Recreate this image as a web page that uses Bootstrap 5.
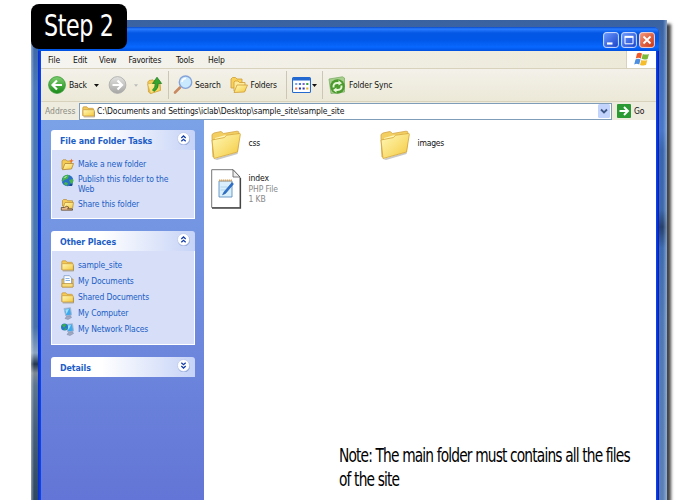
<!DOCTYPE html>
<html lang="en">
<head>
<meta charset="utf-8">
<title>Step 2</title>
<link href="https://cdn.jsdelivr.net/npm/bootstrap@5.3.0/dist/css/bootstrap.min.css" rel="stylesheet">
<style>
body{font-family:"DejaVu Sans Condensed","DejaVu Sans",sans-serif;font-stretch:condensed;font-size:8.5px;line-height:10px;letter-spacing:-.2px;color:#111;background:#fff;width:700px;height:500px;overflow:hidden}
svg{display:block;flex:none;overflow:visible}
.stage{width:700px;height:500px;overflow:hidden}
.desk{width:636px;height:490px;margin:20px 0 0 31px;padding:7px 7px 0;background:
 linear-gradient(90deg,rgba(255,255,255,.45) 0,transparent 3px,transparent 632px,rgba(190,215,245,.55) 636px),
 linear-gradient(#3a62a0 0,#4a78b8 60px,#4a78b0 200px,#4a72a8 300px,#8aa4c0 326px,#22364f 337px,#7d8894 346px,#5d7690 358px,#46607e 400px,#2c4560 480px) 0 7px/10px 480px no-repeat,
 linear-gradient(#3a62a0 0,#426fb8 50px,#4a78c8 110px,#3a66ae 130px,#3d68ae 175px,#3d68a8 190px,#26406c 207px,#3f6cae 228px,#4f78b4 300px,#5b80b6 480px)}
.desk{box-shadow:4px 4px 3px #444}
.win{width:621px;height:480px;border-radius:6px 6px 0 0;padding:0 3px;background:linear-gradient(90deg,#0a2cc8 0,#0a48f5 3px,#0a48f5 618px,#0a18b8 621px)}
.tbar{height:24px;margin:0 -3px;padding:5px 4px 0 0;border-radius:6px 6px 0 0;background:linear-gradient(#0a4ac8 0,#2a7cff 2px,#0357e4 6px,#0157e8 13px,#0868ff 20px,#0050e0 24px);gap:2px}
.wb{width:16px;height:16px}
.menu{height:18px;background:linear-gradient(90deg,#f5f4f0,#ece9d8);border-bottom:1px solid #d8d2bd;padding-left:7px}
.flagbox{width:30px;height:17px;background:#fff;border-left:1px solid #d8d2bd}
.tools{height:33px;background:linear-gradient(#f3f1e9,#ece9d8);border-bottom:1px solid #d8d2bd;padding-left:7px}
.addr{height:18px;background:#eeebdf;padding-left:4px}
.field{width:533px;height:17px;border:1px solid #7f9db9;background:#fff;padding:0 1px 0 2px}
.pathtext{margin-left:2px;letter-spacing:-.13px}
.vsep{width:1px;height:28px;background:#cbc7b4}
.side{width:163px;height:380px;background:linear-gradient(#7ba2e7,#6375d6);padding:10px 9px 0 10px}
.ptitle{height:20px;border-radius:3px 3px 0 0;background:linear-gradient(90deg,#fff 35%,#c6d3f7);padding:1px 5px 0 9px;color:#215dc6;font-weight:700;font-size:8.8px;letter-spacing:-.06px}
.ptitle svg{margin-top:-4px}
.pbody{background:#d6dff7;border:1px solid #fff;border-top:0;color:#215dc6;padding:6px 6px 0 9px;letter-spacing:-.12px}
.prow{height:16px;gap:4px}
.pic{width:13px;height:13px}
.main{background:#fff;padding:10px 0 0 7px}
.muted{color:#888}
.stepbox{position:absolute;left:31px;top:4px;width:96px;height:45px;border-radius:8px;background:#000;color:#fff;padding:5px 0 0 13px}
.stepbox span{display:inline-block;font-size:30.5px;line-height:34px;letter-spacing:-.5px;transform:scaleX(.81);transform-origin:0 0;white-space:nowrap}
.note{position:absolute;left:338.5px;top:443px;font-size:19px;line-height:24px;letter-spacing:-1.050px;color:#000;transform:scaleX(.806);transform-origin:0 0;white-space:nowrap}
</style>
</head>
<body>
<svg width="0" height="0" class="position-absolute">
<defs>
<linearGradient id="fg" x1="0" y1="0" x2="1" y2="1"><stop offset="0" stop-color="#fff9b8"/><stop offset="1" stop-color="#f4c93e"/></linearGradient>
<linearGradient id="gg" x1="0" y1="0" x2="0" y2="1"><stop offset="0" stop-color="#7fce6f"/><stop offset="1" stop-color="#178a17"/></linearGradient>
<linearGradient id="sg" x1="0" y1="0" x2="0" y2="1"><stop offset="0" stop-color="#e2e2e0"/><stop offset="1" stop-color="#a5a5a3"/></linearGradient>
<linearGradient id="bg1" x1="0" y1="0" x2="1" y2="1"><stop offset="0" stop-color="#6d9bff"/><stop offset="1" stop-color="#1741c8"/></linearGradient>
<linearGradient id="rg" x1="0" y1="0" x2="1" y2="1"><stop offset="0" stop-color="#f59a7c"/><stop offset="1" stop-color="#c9300e"/></linearGradient>
<symbol id="sfold" viewBox="0 0 13 13"><path d="M.8 10.500V3q0-1.200 1-1.200h3L6 3.300h4.500q1 0 1 1v6.200z" fill="#f3cb55" stroke="#c4923a" stroke-width=".7"/><path d="M1 11V5.500q0-.8.800-.8h9.700q.8 0 .8.800V11z" fill="url(#fg)" stroke="#c9963a" stroke-width=".7"/><path d="M1.800 11.900h10.900V6.500" fill="none" stroke="#8d7340" stroke-width=".6"/></symbol>
<symbol id="bfold" viewBox="0 0 30 30"><path d="M3 29 27 22 26.500 24 6 30z" fill="#777" opacity=".4"/><path d="M1 8V4.500L3 3l7-1.500 2.500 2L26 1.200q2-.2 2 1.800L26.500 21 2 27z" fill="#f3cf62" stroke="#d3a445" stroke-width=".8"/><path d="M13 5.500 25.500 3.500V20L4 25V8z" fill="#fff6b5"/><path d="M1 10 13.500 7.500l2-2.300 13-1.700q1 0 .8 1L26.500 22 3 28.500z" fill="url(#fg)" stroke="#d3a335" stroke-width=".8"/></symbol>
<symbol id="mon" viewBox="0 0 13 13"><path d="M3 1.500 9.500.8 10.500 8 4.800 9z" fill="#3fa9ee" stroke="#a9b5cf" stroke-width="1"/><path d="M4.200 2.500 8 2 5.500 7z" fill="#9de1ff"/><path d="M5.500 9.500l4-.7 1 1.700-3.500 2-3-1z" fill="#a3aac0" stroke="#7383ad" stroke-width=".5"/></symbol>
<symbol id="disc" viewBox="0 0 13 13"><circle cx="6.900" cy="7.200" r="6.100" fill="#8ba1d5"/><circle cx="6.500" cy="6.500" r="6" fill="#fff" stroke="#b9c6e8" stroke-width=".7"/></symbol>
<symbol id="chev" viewBox="0 0 13 13"><use href="#disc" width="13" height="13"/><path d="M4.300 6 6.500 4 8.700 6M4.300 9.300 6.500 7.300l2.200 2" fill="none" stroke="#153ea8" stroke-width="1.300"/></symbol>
</defs>
</svg>
<div class="stage d-flex position-relative">
 <div class="desk flex-shrink-0">
  <div class="win">
   <div class="tbar d-flex justify-content-end">
    <svg class="wb" viewBox="0 0 16 16"><rect x=".6" y=".6" width="14.800" height="14.800" rx="2.500" fill="url(#bg1)" stroke="#d5e1ff"/><path d="M4 11.500h5.500" stroke="#fff" stroke-width="2.200"/></svg>
    <svg class="wb" viewBox="0 0 16 16"><rect x=".6" y=".6" width="14.800" height="14.800" rx="2.500" fill="url(#bg1)" stroke="#d5e1ff"/><path d="M4 5.200h8v6.600H4z" fill="none" stroke="#fff" stroke-width="1"/><path d="M3.500 4.700h9" stroke="#fff" stroke-width="1.800"/></svg>
    <svg class="wb" viewBox="0 0 16 16"><rect x=".6" y=".6" width="14.800" height="14.800" rx="2.500" fill="url(#rg)" stroke="#f5d8d8"/><path d="M4.500 4.500l7 7M11.500 4.500l-7 7" stroke="#fff" stroke-width="1.800"/></svg>
   </div>
   <div class="menu d-flex align-items-center">
    <span style="width:25px">File</span><span style="width:26px">Edit</span><span style="width:29.500px">View</span><span style="width:47.500px">Favorites</span><span style="width:32px">Tools</span><span>Help</span>
    <div class="flagbox ms-auto d-flex justify-content-center align-items-center">
     <svg width="16" height="15" viewBox="0 0 16 15"><path d="M3 1.500q2.500-1.500 5 0L6.800 6.500q-2.500-1.300-5 0z" fill="#ee5a2a"/><path d="M8.800 2q3 1.200 6.200 0L13.600 7q-3 1.200-6-.2z" fill="#7cbb3a"/><path d="M1.500 7.500q2.500-1.300 5 0L5.200 12.500q-2.500-1.300-5 0z" fill="#4c8fe0"/><path d="M7.300 7.900q3 1.300 6 .2L12 13.100q-3 1-6-.2z" fill="#f5bc2c"/></svg>
    </div>
   </div>
   <div class="tools d-flex align-items-center">
    <svg width="18" height="18" viewBox="0 0 18 18"><circle cx="9" cy="9" r="8.400" fill="url(#gg)" stroke="#3a9a38" stroke-width=".8"/><path d="M14 9H5M9 4.500 4.500 9 9 13.500" fill="none" stroke="#fff" stroke-width="2.200"/></svg>
    <span style="width:25px;margin-left:3px">Back</span>
    <svg width="5" height="3" viewBox="0 0 5 3"><path d="M0 0h5L2.500 3z" fill="#111"/></svg>
    <svg class="ms-2" width="20" height="18" viewBox="-1.500 0 20 18"><circle cx="9" cy="9" r="8.400" fill="url(#sg)" stroke="#aaa" stroke-width=".8"/><path d="M4 9h8.500M9 4.500 13.500 9 9 13.500" fill="none" stroke="#fff" stroke-width="2.200"/></svg>
    <svg style="margin:0 9px 0 7px" width="4" height="3" viewBox="0 0 5 3"><path d="M0 0h5L2.500 3z" fill="#bbb"/></svg>
    <svg width="16" height="18" viewBox="0 0 16 18"><path d="M.8 6 2 4.500l4-.7 1 1 4.500-.8 1.500 1.500.5 8.500L3.500 17.500 1.500 16z" fill="#f3cb55" stroke="#c99a32" stroke-width=".7"/><path d="M.6 8 12 6l1.500 8.500-10 3z" fill="url(#fg)" stroke="#d0a040" stroke-width=".6"/><path d="M7 15.500q5-3 4.300-8h3.300L10 1.200 5.500 7.500h2.700Q8.500 11.500 5.500 14z" fill="#35a52f" stroke="#1d7a1c" stroke-width=".7"/></svg>
    <div class="vsep" style="margin:0 4px 0 5px"></div>
    <svg width="20" height="20" viewBox="0 0 20 20"><path d="M7 12.500 2 17.500" stroke="#c98a62" stroke-width="2.600" stroke-linecap="round"/><circle cx="12.500" cy="7.200" r="6.200" fill="#c9e9ff" stroke="#86a3d8" stroke-width="1.400"/><path d="M9 7q.5-3.500 4-3.500" stroke="#fff" stroke-width="1.600" fill="none"/></svg>
    <span style="width:35px;margin-left:2px;letter-spacing:-.1px">Search</span>
    <svg width="18" height="18" viewBox="0 0 18 18"><path d="M1 12V3l1.500-1.500h3L7 3h5v9z" fill="#f7d15a" stroke="#cf9c35" stroke-width=".8"/><path d="M4 15V6l1-1h3l1.500 1.500H15V15z" fill="#fdeb9a" stroke="#cf9c35" stroke-width=".8"/><path d="M4 16.500 7 9h10.500L14.500 16z" fill="url(#fg)" stroke="#cf9c35" stroke-width=".8"/></svg>
    <span style="width:35.500px;margin-left:2.500px">Folders</span>
    <div class="vsep" style="margin-right:4.500px"></div>
    <svg width="19" height="16" viewBox="0 0 18 16" preserveAspectRatio="none"><rect x=".5" y=".5" width="17" height="15" rx="1" fill="#fff" stroke="#2369d0"/><path d="M1 2h16" stroke="#2369d0" stroke-width="3"/><path d="M3 6h2v2H3z" fill="#7a9ee0"/><path d="M6.500 6h2v2h-2z" fill="#4a7ad0"/><path d="M10 6h2v2h-2z" fill="#7d63c8"/><path d="M13.500 6h2v2h-2z" fill="#37a33c"/><path d="M3 10.500h2v2H3z" fill="#f07040"/><path d="M6.500 10.500h2v2h-2z" fill="#1d3ca8"/><path d="M10 10.500h2v2h-2z" fill="#3a3a9a"/><path d="M13.500 10.500h2v2h-2z" fill="#e8b128"/></svg>
    <svg style="margin:0 5px 0 1px" width="5" height="3" viewBox="0 0 5 3"><path d="M0 0h5L2.500 3z" fill="#111"/></svg>
    <div class="vsep" style="margin-right:5px"></div>
    <svg width="18" height="19" viewBox="0 0 18 19"><path d="M1 3 14.500.8 16.500 2v14L3 17.500z" fill="#a8cf8e" stroke="#7fae6a" stroke-width=".8"/><circle cx="9.500" cy="10.500" r="7.300" fill="#4b9a2e"/><path d="M5.500 11.500Q5 7 9.500 7h2M13.500 9.500q.5 4.500-4 4.500H7" fill="none" stroke="#e6f7d8" stroke-width="1.900"/><path d="M10.500 4.300 14 7.300 10.500 9.500zM8.500 11.500 5 14 8.500 16.700z" fill="#e6f7d8"/></svg>
    <span style="margin-left:3.500px;letter-spacing:-.1px">Folder Sync</span>
   </div>
   <div class="addr d-flex align-items-center">
    <span style="width:34px;color:#8b8b84;letter-spacing:0">Address</span>
    <div class="field d-flex align-items-center">
     <svg width="13" height="13"><use href="#sfold"/></svg>
     <span class="pathtext">C:\Documents and Settings\iclab\Desktop\sample_site\sample_site</span>
     <svg class="ms-auto" width="12" height="14" viewBox="0 0 12 14"><rect width="12" height="14" rx="1.500" fill="#c2d3fc"/><path d="M3 5.500l3 3 3-3" fill="none" stroke="#3f5786" stroke-width="1.800"/></svg>
    </div>
    <svg style="margin:0 3px 0 5px" width="14" height="14" viewBox="0 0 14 14"><rect width="14" height="14" rx="1" fill="#2b9a35"/><path d="M2.500 7h8M7 3l4 4-4 4" fill="none" stroke="#fff" stroke-width="1.900"/></svg>
    <span>Go</span>
   </div>
   <div class="d-flex">
    <div class="side flex-shrink-0">
     <div class="ptitle d-flex align-items-center"><span class="flex-grow-1">File and Folder Tasks</span><svg width="13" height="13"><use href="#chev"/></svg></div>
     <div class="pbody" style="height:69px">
      <div class="prow d-flex align-items-center"><svg class="pic" viewBox="0 0 13 13"><path d="M1 11V3l1-1.200h3L6 3h4v7z" fill="#f3cb55" stroke="#b98a35" stroke-width=".7"/><path d="M1.500 11.700 4 5.500h8.500L10.500 11z" fill="url(#fg)" stroke="#a97a2a" stroke-width=".7"/><path d="M10.500.5l.6 1.700 1.700.6-1.700.7-.6 1.700-.7-1.700-1.700-.7 1.700-.6z" fill="#f0702a"/></svg><span>Make a new folder</span></div>
      <div class="d-flex" style="gap:4px;height:24px;padding-top:2px"><svg class="pic" viewBox="0 0 13 13"><circle cx="6.500" cy="6.500" r="5.800" fill="#2b70c8"/><path d="M2 3q4-3.500 6-1.500L7 4.500 3.500 6 1 8zM8 6l4-1q1 4-2 5zM4 8l3 1-1 3-3-2z" fill="#47b547"/><path d="M3.500 3.500l2-1" stroke="#d9f8e6"/><path d="M9 10l3-.5-1 2.500H8z" fill="#174d90"/></svg><span>Publish this folder to the<br>Web</span></div>
      <div class="prow d-flex align-items-center"><svg class="pic" viewBox="0 0 13 13"><path d="M1.500 8V2.500l1-1h3l1 1.200h5V9z" fill="#f3cb55" stroke="#b98a35" stroke-width=".7"/><path d="M2 10 4 4.500h8.500l-1 6z" fill="url(#fg)" stroke="#b98a35" stroke-width=".7"/><path d="M.3 9.500h3l2.500-1.300L8 9.500l-1.500 1.300 5 .2v1.200H.3z" fill="#e8b98c" stroke="#4d3a22" stroke-width=".7"/></svg><span>Share this folder</span></div>
     </div>
     <div class="ptitle d-flex align-items-center" style="margin-top:12px"><span class="flex-grow-1">Other Places</span><svg width="13" height="13"><use href="#chev"/></svg></div>
     <div class="pbody" style="height:94px">
      <div class="prow d-flex align-items-center"><svg class="pic"><use href="#sfold"/></svg><span>sample_site</span></div>
      <div class="prow d-flex align-items-center"><svg class="pic" viewBox="0 0 13 13"><path d="M1 4h11v8H1z" fill="#f0cd62" stroke="#b78a2c" stroke-width=".8"/><path d="M3 .7h5.500L10.500 3v6H3z" fill="#fff" stroke="#6f8fc0" stroke-width=".7"/><path d="M4.500 3.500h4M4.500 5.500h4.500" stroke="#6ba3e0" stroke-width=".8"/><path d="M1 8.500h11V12H1z" fill="#f6d978" stroke="#b78a2c" stroke-width=".6"/></svg><span>My Documents</span></div>
      <div class="prow d-flex align-items-center"><svg class="pic"><use href="#sfold"/></svg><span>Shared Documents</span></div>
      <div class="prow d-flex align-items-center"><svg class="pic"><use href="#mon"/></svg><span>My Computer</span></div>
      <div class="prow d-flex align-items-center"><svg class="pic" viewBox="0 0 13 13"><use href="#mon" x="2" width="13" height="13"/><circle cx="3.500" cy="4" r="3.500" fill="#2878c8"/><path d="M1 2q3-2 4 0L3 5zM3 6l3-1-2 2.500z" fill="#3cb43c"/></svg><span>My Network Places</span></div>
     </div>
     <div class="ptitle d-flex align-items-center" style="margin-top:12px"><span class="flex-grow-1">Details</span><svg width="13" height="13" viewBox="0 0 13 13"><use href="#disc" width="13" height="13"/><path d="M4.300 3.700l2.200 2 2.200-2M4.300 7l2.200 2 2.200-2" fill="none" stroke="#153ea8" stroke-width="1.300"/></svg></div>
    </div>
    <div class="main flex-grow-1">
     <div class="d-flex">
      <div class="d-flex align-items-start" style="width:169px"><svg width="30" height="30"><use href="#bfold"/></svg><span style="margin:8px 0 0 7.500px">css</span></div>
      <div class="d-flex align-items-start"><svg width="30" height="30"><use href="#bfold"/></svg><span style="margin:8px 0 0 7.500px">images</span></div>
     </div>
     <div class="d-flex" style="margin-top:9px">
      <svg width="30" height="40" viewBox="0 0 30 40"><path d="M.7.700H22L29 8v30.500H.7z" fill="#fff" stroke="#777"/><path d="M29.500 9v30.200H1" fill="none" stroke="#444" stroke-width="1.200"/><path d="M22 .7V8h7z" fill="#eee" stroke="#555" stroke-width=".8"/><path d="M8 12h13v16H8z" fill="#d9effb" stroke="#5c8fc0" stroke-width=".9"/><path d="M8 11.500h13" stroke="#d9a35c" stroke-width="2" stroke-dasharray="1.300 .7"/><path d="M9.500 18h7M9.500 21h5" stroke="#a7cdea" stroke-width=".8"/><path d="M21 13.500 13 23l-1.500 2.800 3-1.300L22.500 15z" fill="#2a72cc" stroke="#1a4fa0" stroke-width=".5"/></svg>
      <div style="margin:4px 0 0 7.500px;line-height:10.500px;letter-spacing:-.1px"><div>index</div><div class="muted">PHP File</div><div class="muted">1 KB</div></div>
     </div>
    </div>
   </div>
  </div>
 </div>
 <div class="stepbox"><span>Step 2</span></div>
 <div class="note">Note: The main folder must contains all the files<br>of the site</div>
</div>
<script src="https://cdn.jsdelivr.net/npm/bootstrap@5.3.0/dist/js/bootstrap.bundle.min.js"></script>
</body>
</html>
